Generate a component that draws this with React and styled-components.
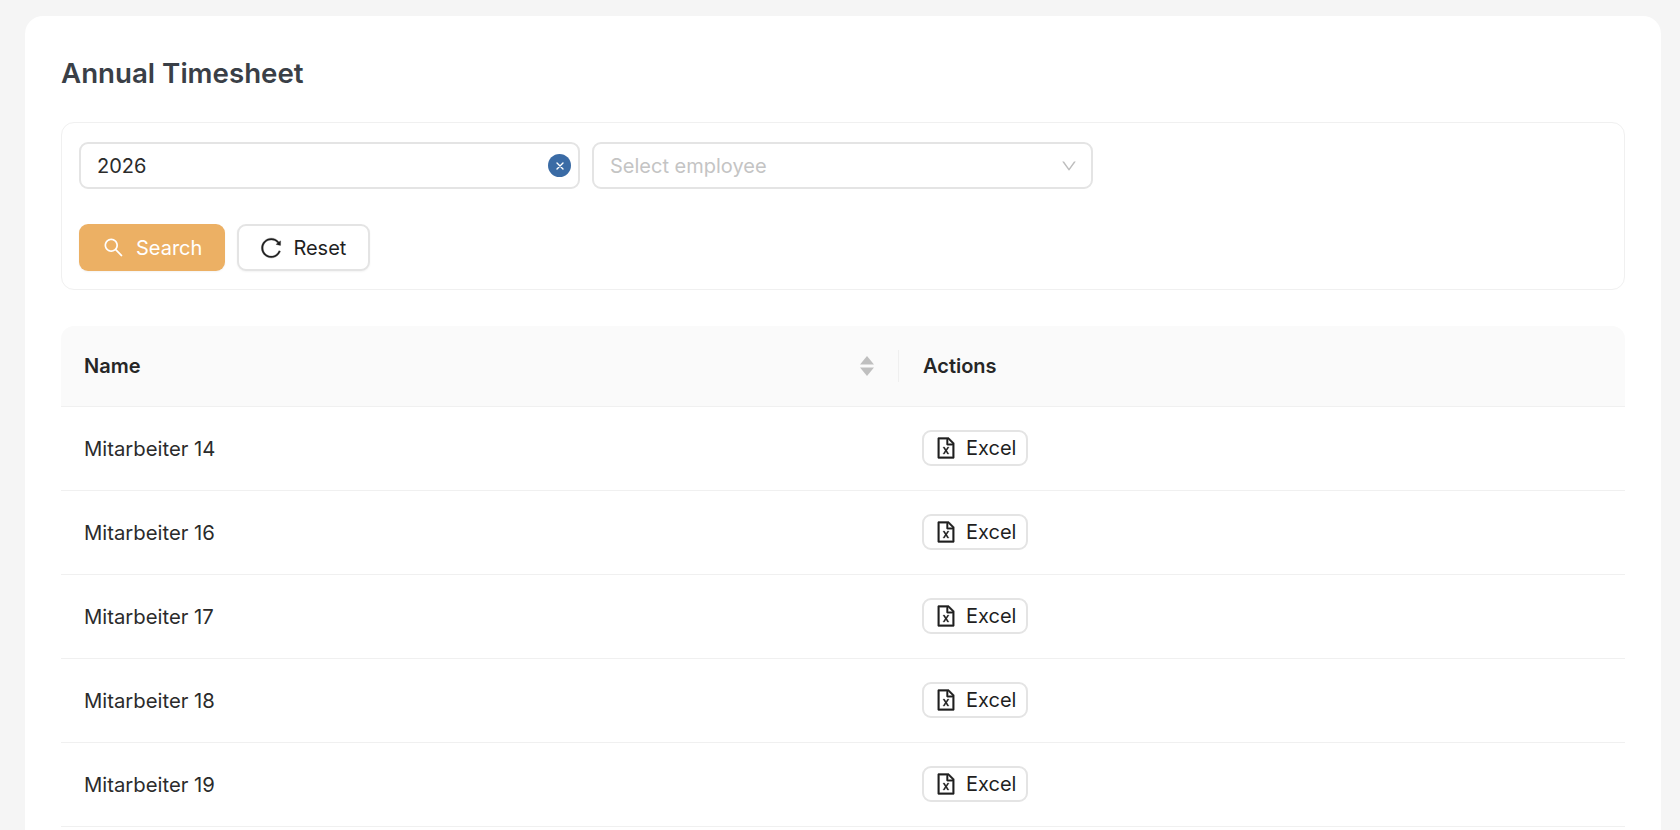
import { Fragment } from "react";
import styled, { createGlobalStyle } from "styled-components";
import { AiOutlineSearch, AiOutlineReload, AiOutlineFileExcel, AiOutlineDown } from "react-icons/ai";

const GlobalStyle = createGlobalStyle`
    html, body {
        margin: 0;
        height: 100%;
        overflow: hidden;
        background: #f5f5f5;
        font-family: Inter, "Liberation Sans", sans-serif;
    }
`

const Page = styled.main`
    height: 830px;
    overflow: hidden;
    padding: 16px 19px 0 25px;
    box-sizing: border-box;
`

const Card = styled.section`
    background: white;
    border-radius: 18px 18px 0 0;
    padding: 36px 36px 0;
    min-height: 900px;
`

const Title = styled.h1`
    margin: 1px 0 29px;
    font-size: 27.7px;
    line-height: 40px;
    font-weight: 600;
    color: #3a3f47;
`

const FilterBox = styled.div`
    border: 1px solid #f0f0f0;
    border-radius: 13px;
    padding: 19px 17px 0;
    height: 168px;
    box-sizing: border-box;
    margin-bottom: 36px;
`

const Fields = styled.div`
    display: flex;
    gap: 12px;
    margin-bottom: 35px;
`

const Field = styled.div`
    width: 501px;
    height: 47px;
    box-sizing: border-box;
    border: 2px solid #e4e4e4;
    border-radius: 9px;
    padding: 0 7px 0 16px;
    display: flex;
    align-items: center;
    justify-content: space-between;
    font-size: 20px;
    color: ${props => props.$placeholder ? "#c4c4c4" : "#2b2b2b"};
`

const ClearButton = styled.span`
    width: 23px;
    height: 23px;
    border-radius: 50%;
    background: #3a6ba5;
    display: flex;
    align-items: center;
    justify-content: center;
`

const Chevron = styled(AiOutlineDown)`
    color: #bdbdbd;
    font-size: 18px;
    margin-right: 6px;
`

const Buttons = styled.div`
    display: flex;
    gap: 12px;
`

const Button = styled.button`
    height: 47px;
    box-sizing: border-box;
    display: flex;
    align-items: center;
    gap: ${props => props.$primary ? "11px" : "10px"};
    padding: ${props => props.$primary ? "0 23px" : "0 22px 0 20px"};
    border-radius: 9px;
    font-family: inherit;
    font-size: 20px;
    border: ${props => props.$primary ? "none" : "2px solid #e4e4e4"};
    background: ${props => props.$primary ? "#ecb064" : "white"};
    color: ${props => props.$primary ? "white" : "#1f1f1f"};
    box-shadow: 0 1px 2px rgba(0, 0, 0, 0.05);
`

const ResetIcon = styled(AiOutlineReload)`
    font-size: 24px;
    stroke: currentColor;
    stroke-width: 12;
`

const Table = styled.div`
    display: grid;
    grid-template-columns: 838px 1fr;
`

const HeaderCell = styled.div`
    position: relative;
    background: #fafafa;
    height: 80.5px;
    box-sizing: border-box;
    border-bottom: 1px solid #f0f0f0;
    padding: ${props => props.$end ? "0 24px" : "0 24px 0 23px"};
    display: flex;
    align-items: center;
    justify-content: space-between;
    font-size: 20px;
    font-weight: 600;
    color: #262626;
    border-radius: ${props => props.$end ? "0 13px 0 0" : "13px 0 0 0"};
`

const Divider = styled.span`
    position: absolute;
    right: 0;
    top: 24px;
    height: 32px;
    width: 1px;
    background: #efefef;
`

const Cell = styled.div`
    height: 84px;
    box-sizing: border-box;
    border-bottom: 1px solid #f0f0f0;
    padding: 0 23px;
    display: flex;
    align-items: center;
    font-size: 20.3px;
    color: #2b2b2b;
`

const ExcelButton = styled.button`
    height: 36px;
    box-sizing: border-box;
    display: flex;
    align-items: center;
    gap: 8px;
    padding: 0 10px;
    border: 2px solid #e4e4e4;
    border-radius: 9px;
    background: white;
    font-family: inherit;
    font-size: 20px;
    color: #1f1f1f;
`

const ExcelIcon = styled(AiOutlineFileExcel)`
    font-size: 24px;
    stroke: currentColor;
    stroke-width: 16;
`

const employees = ["Mitarbeiter 14", "Mitarbeiter 16", "Mitarbeiter 17", "Mitarbeiter 18", "Mitarbeiter 19"];

function SortIcon() {
    return (
        <svg width="16" height="22" viewBox="0 0 16 22" fill="#bfbfbf">
            <path d="M8 1 L15 9.5 H1 Z"/>
            <path d="M8 21 L15 12.5 H1 Z"/>
        </svg>
    )
}

function ClearIcon() {
    return (
        <svg width="10" height="10" viewBox="0 0 10 10" stroke="white" strokeWidth="1.4" strokeLinecap="round">
            <path d="M2 2 L8 8 M8 2 L2 8"/>
        </svg>
    )
}

export default function App() {
    return (
        <Page>
            <GlobalStyle/>
            <Card>
                <Title>Annual Timesheet</Title>
                <FilterBox>
                    <Fields>
                        <Field>2026<ClearButton><ClearIcon/></ClearButton></Field>
                        <Field $placeholder>Select employee<Chevron/></Field>
                    </Fields>
                    <Buttons>
                        <Button $primary><AiOutlineSearch size={23}/>Search</Button>
                        <Button><ResetIcon/>Reset</Button>
                    </Buttons>
                </FilterBox>
                <Table>
                    <HeaderCell>Name<SortIcon/><Divider/></HeaderCell>
                    <HeaderCell $end>Actions</HeaderCell>
                    {employees.map(name => (
                        <Fragment key={name}>
                            <Cell>{name}</Cell>
                            <Cell><ExcelButton><ExcelIcon/>Excel</ExcelButton></Cell>
                        </Fragment>
                    ))}
                </Table>
            </Card>
        </Page>
    )
}
